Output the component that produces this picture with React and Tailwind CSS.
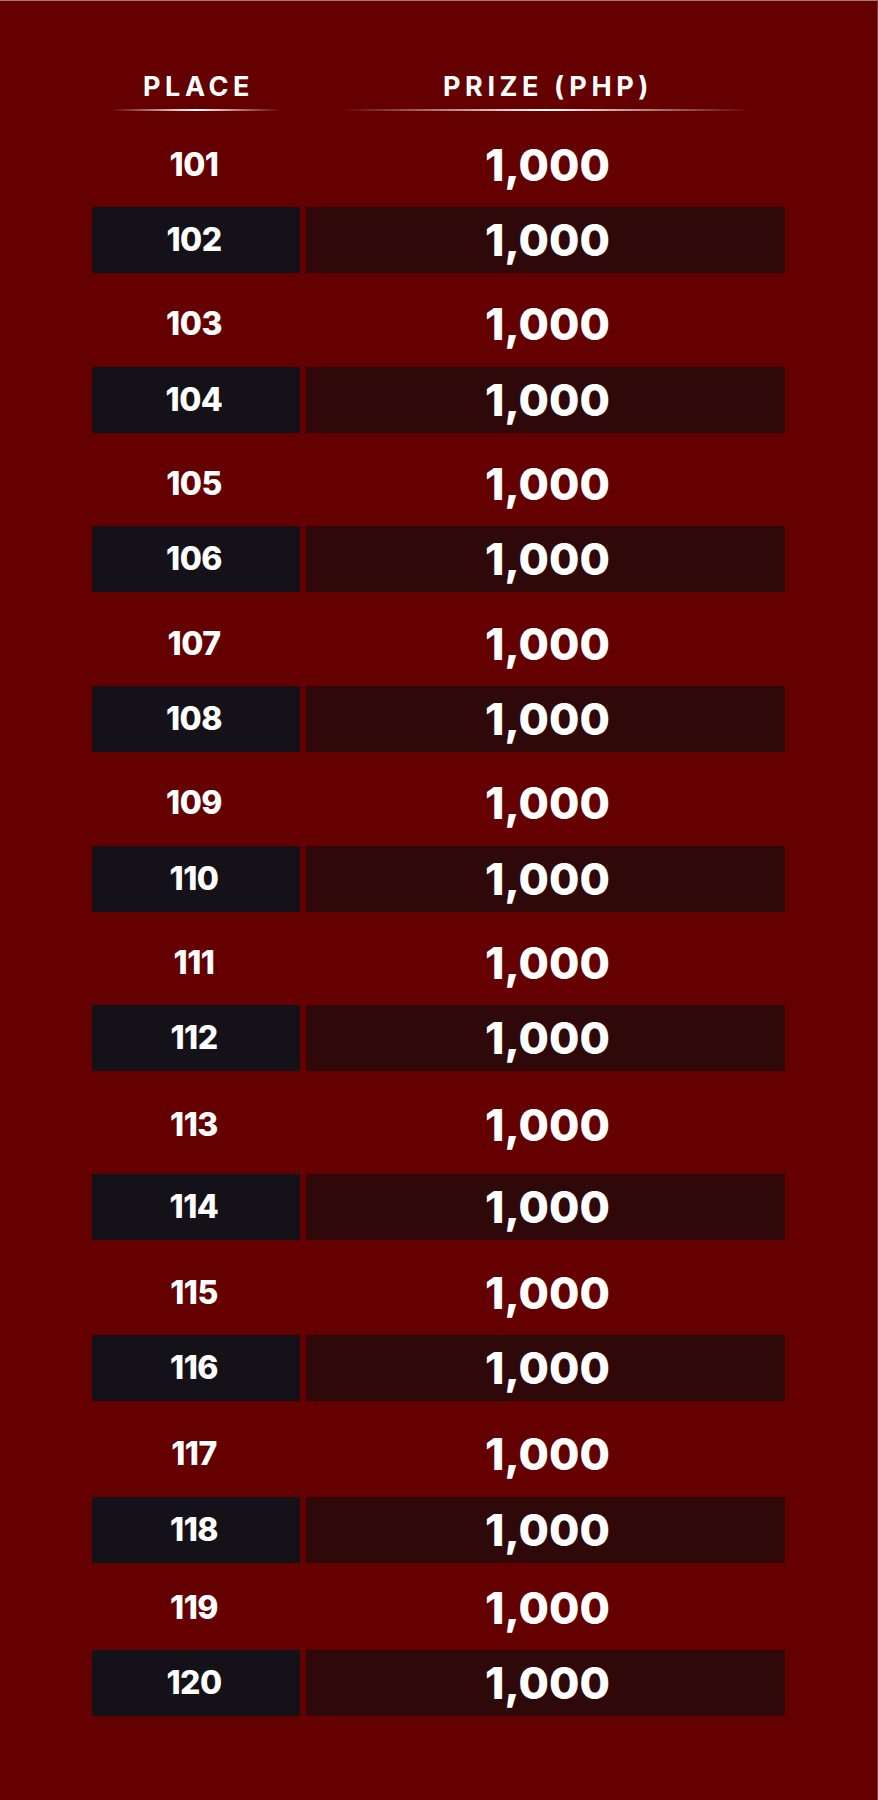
import React from "react";

const rows = [
  { n: "101", light: "mt-[21px] mb-[9px]" },
  { n: "102" },
  { n: "103", light: "mt-[18px] mb-[10px]" },
  { n: "104" },
  { n: "105", light: "mt-[18px] mb-[9px]" },
  { n: "106" },
  { n: "107", light: "mt-[19px] mb-[9px]" },
  { n: "108" },
  { n: "109", light: "mt-[18px] mb-[10px]" },
  { n: "110" },
  { n: "111", light: "mt-[18px] mb-[9px]" },
  { n: "112" },
  { n: "113", light: "mt-[21px] mb-[16px]" },
  { n: "114" },
  { n: "115", light: "mt-[20px] mb-[9px]" },
  { n: "116" },
  { n: "117", light: "mt-[20px] mb-[10px]" },
  { n: "118" },
  { n: "119", light: "mt-[12px] mb-[9px]" },
  { n: "120" },
];

function Row({ n, light }) {
  const isLight = Boolean(light);
  return (
    <div className={`flex h-[66px] ${isLight ? light : ""}`}>
      <div
        className={`flex w-[208px] items-center justify-center ${
          isLight ? "" : "bg-[#151118]"
        }`}
      >
        <span className="mr-[4px] text-[32px] font-extrabold leading-none tracking-[-0.5px] text-white">
          {n}
        </span>
      </div>
      <div
        className={`ml-[6px] flex w-[479px] items-center justify-center ${
          isLight ? "" : "bg-[#2f080a]"
        }`}
      >
        <span className="ml-[4px] text-[44px] font-extrabold leading-none tracking-[0px] text-white">
          1,000
        </span>
      </div>
    </div>
  );
}

export default function App() {
  return (
    <div className="h-[1800px] w-[878px] border-t border-r border-t-[#a57a7a] border-r-[#8a3434] bg-[#640000] font-['Inter',sans-serif]">
      <div className="pl-[92px] pt-[72px]">
        <div className="flex">
          <div className="flex w-[208px] flex-col items-center">
            <span className="h-[27px] pl-[5px] text-[27px] font-bold leading-none tracking-[0.17em] text-white">
              PLACE
            </span>
            <div className="mt-[9px] h-[2px] w-[170px] bg-linear-to-r from-transparent via-white to-transparent" />
          </div>
          <div className="ml-[6px] flex w-[479px] flex-col items-center">
            <span className="h-[27px] pl-[5px] text-[27px] font-bold leading-none tracking-[0.17em] text-white">
              PRIZE (PHP)
            </span>
            <div className="mt-[9px] h-[2px] w-[410px] bg-linear-to-r from-transparent via-white to-transparent" />
          </div>
        </div>
        <div className="flex flex-col">
          {rows.map((r) => (
            <Row key={r.n} n={r.n} light={r.light} />
          ))}
        </div>
      </div>
    </div>
  );
}
